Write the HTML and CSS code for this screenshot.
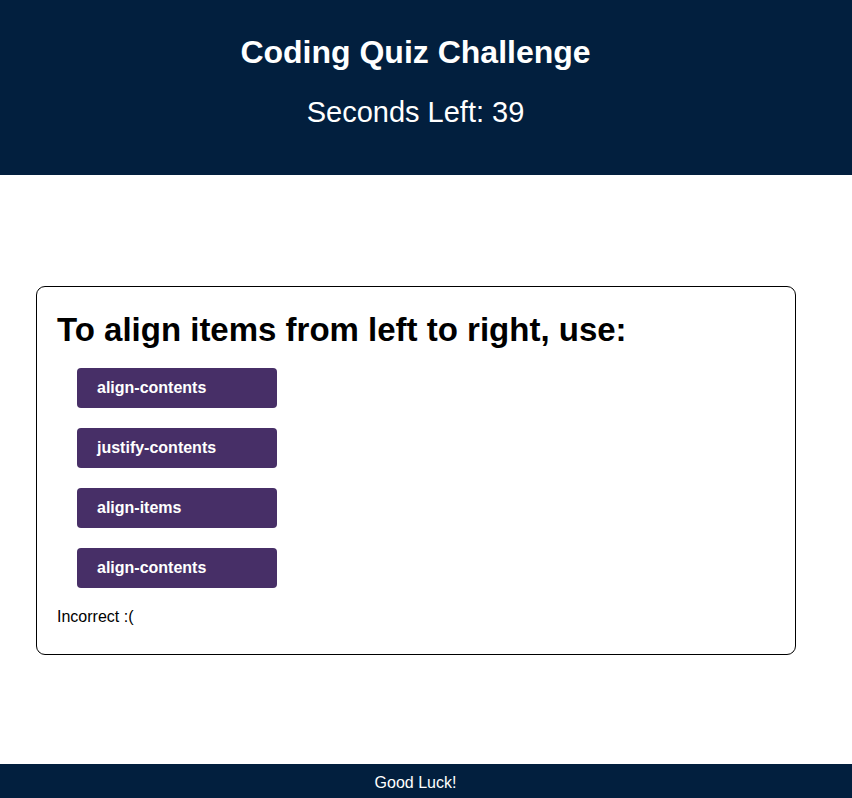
FILE: index.html
```html
<!DOCTYPE html>
<html lang="en">
<head>
<meta charset="utf-8">
<title>Coding Quiz Challenge</title>
<link rel="stylesheet" href="styles.css">
</head>
<body>
<header class="top">
  <h1 class="title">Coding Quiz Challenge</h1>
  <p class="timer">Seconds Left: 39</p>
</header>
<main class="main">
  <section class="card">
    <h2 class="question">To align items from left to right, use:</h2>
    <div class="choices">
      <button class="choice">align-contents</button>
      <button class="choice">justify-contents</button>
      <button class="choice">align-items</button>
      <button class="choice">align-contents</button>
    </div>
    <p class="feedback">Incorrect :(</p>
  </section>
</main>
<footer class="foot">Good Luck!</footer>
</body>
</html>
```
FILE: styles.css
```css
* { box-sizing: border-box; }
html, body { margin: 0; padding: 0; }
body {
  font-family: "Liberation Sans", Arial, Helvetica, sans-serif;
  color: #000;
  background: #fff;
  min-height: 100vh;
  display: flex;
  flex-direction: column;
}
.top {
  background: #021f3e;
  color: #fff;
  text-align: center;
  height: 175px;
  padding: 34px 21px 0 0;
}
.title {
  margin: 0;
  font-size: 32px;
  font-weight: bold;
  line-height: 37px;
}
.timer {
  margin: 25px 0 0;
  font-size: 29px;
  line-height: 33px;
}
.main {
  padding: 111px 21px 0 0;
}
.card {
  margin: 0 35px 0 36px;
  border: 1px solid #000;
  border-radius: 9px;
  padding: 24px 20px 28px;
}
.question {
  margin: 0 0 20px;
  font-size: 33px;
  font-weight: bold;
  line-height: 37px;
}
.choices {
  display: flex;
  flex-direction: column;
  align-items: flex-start;
  gap: 20px;
  padding-left: 20px;
}
.choice {
  width: 200px;
  height: 40px;
  border: none;
  border-radius: 4px;
  background: #472f67;
  color: #fff;
  font-family: "Liberation Sans", Arial, Helvetica, sans-serif;
  font-size: 16px;
  font-weight: bold;
  text-align: left;
  padding: 0 20px;
  margin: 0;
}
.feedback {
  margin: 20px 0 0;
  font-size: 16px;
  line-height: 18px;
}
.foot {
  margin-top: auto;
  background: #021f3e;
  color: #fff;
  text-align: center;
  font-size: 16px;
  line-height: 18px;
  padding: 10px 21px 6px 0;
}
```
